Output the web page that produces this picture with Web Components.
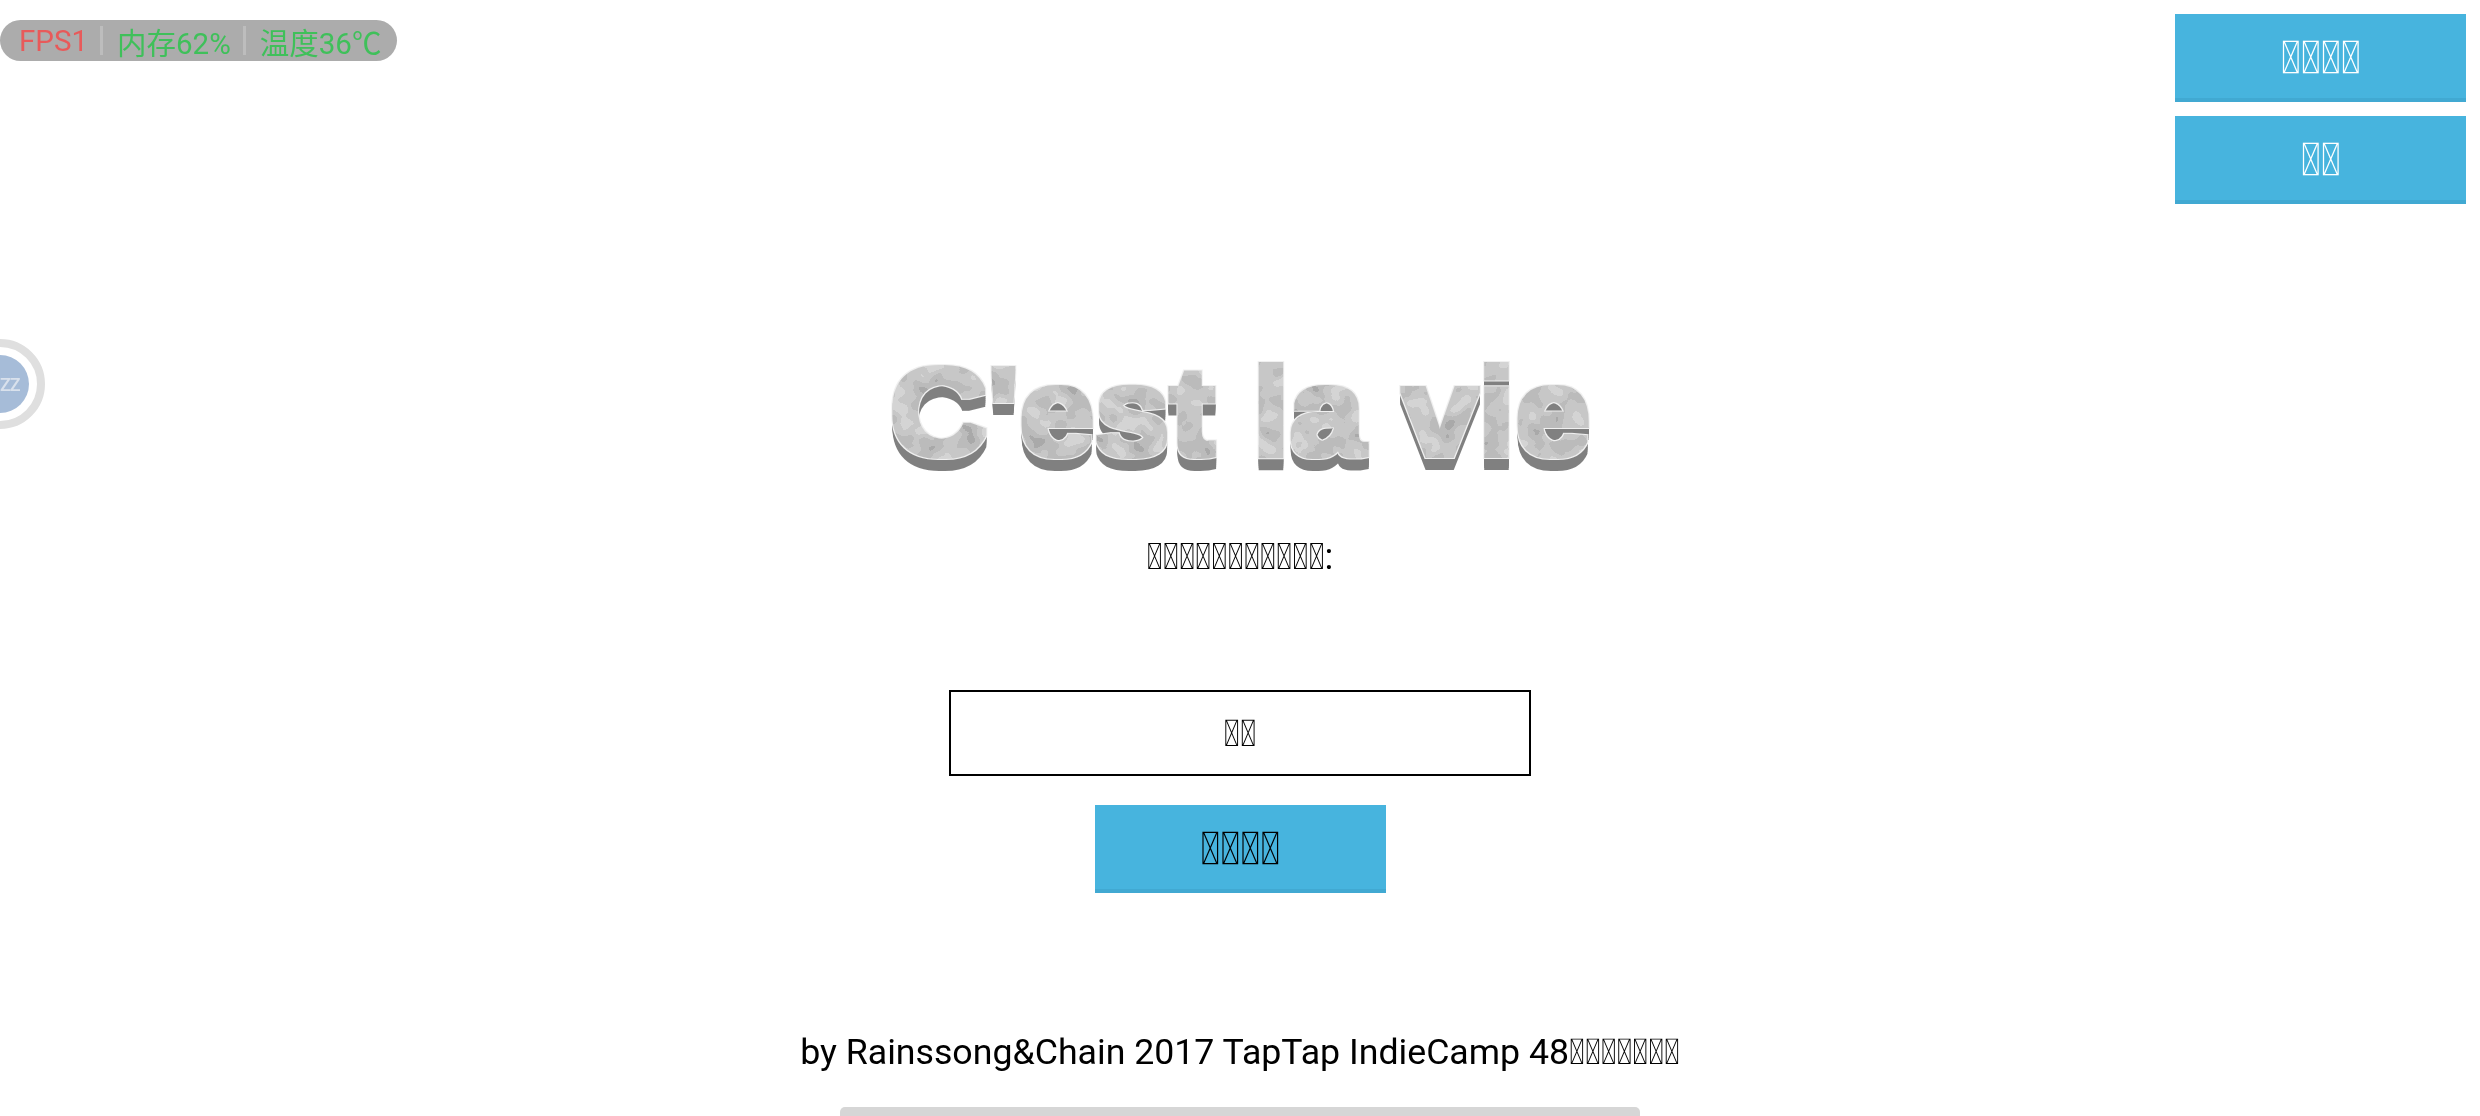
<!DOCTYPE html>
<html lang="zh">
<head>
<meta charset="utf-8">
<title>C'est la vie</title>
<style>
    html, body {
        margin: 0;
        height: 100%;
        background: #fff;
        overflow: hidden;
    }
</style>
</head>
<body>
<game-screen>
    <status-pill slot="overlay"></status-pill>
    <sleep-ball slot="overlay"></sleep-ball>
    <flat-button slot="actions" tone="light">&#xE000;&#xE000;&#xE000;&#xE000;</flat-button>
    <flat-button slot="actions" tone="light">&#xE000;&#xE000;</flat-button>
    <stone-title>C'est la vie</stone-title>
    <p-label>&#xE000;&#xE000;&#xE000;&#xE000;&#xE000;&#xE000;&#xE000;&#xE000;&#xE000;&#xE000;&#xE000;:</p-label>
    <name-box>&#xE000;&#xE000;</name-box>
    <flat-button class="go">&#xE000;&#xE000;&#xE000;&#xE000;</flat-button>
    <foot-note>by Rainssong&amp;Chain 2017 TapTap IndieCamp 48&#xE000;&#xE000;&#xE000;&#xE000;&#xE000;&#xE000;&#xE000;</foot-note>
</game-screen>

<script>
const screenTemplate = document.createElement('template');
screenTemplate.innerHTML = `
<style>
    :host {
        display: flex;
        flex-direction: column;
        align-items: center;
        position: relative;
        height: 1116px;
        font-family: Roboto, sans-serif;
        color: #000;
        will-change: transform;
    }
    .actions {
        align-self: stretch;
        display: flex;
        flex-direction: column;
        align-items: flex-end;
        gap: 14px;
        padding: 14px 14px 0 0;
    }
    main {
        display: flex;
        flex-direction: column;
        align-items: center;
    }
    .bar {
        width: 800px;
        height: 9px;
        margin-top: auto;
        background: #d6d6d6;
        border-radius: 5px 5px 0 0;
    }
</style>
<slot name="overlay"></slot>
<div class="actions"><slot name="actions"></slot></div>
<main><slot></slot></main>
<div class="bar"></div>
`;

class GameScreen extends HTMLElement {
    constructor() {
        super();
        this.attachShadow({ mode: 'open' }).appendChild(screenTemplate.content.cloneNode(true));
    }
}

const pillTemplate = document.createElement('template');
pillTemplate.innerHTML = `
<style>
    :host {
        position: absolute;
        left: 0;
        top: 20px;
        display: flex;
        align-items: center;
        width: 397px;
        height: 41px;
        box-sizing: border-box;
        padding-left: 19px;
        background: #acacac;
        border-radius: 21px;
        font: 400 29.5px Roboto, "Noto Sans CJK SC", sans-serif;
        color: #3fc05a;
        white-space: nowrap;
    }
    .fps { color: #e85a5a; }
    i {
        width: 3px;
        height: 29px;
        margin: 0 14px 0 12px;
        background: #bdbdbd;
    }
</style>
<span class="fps">FPS1</span><i></i><span>内存62%</span><i></i><span>温度36℃</span>
`;

class StatusPill extends HTMLElement {
    constructor() {
        super();
        this.attachShadow({ mode: 'open' }).appendChild(pillTemplate.content.cloneNode(true));
    }
}

const ballTemplate = document.createElement('template');
ballTemplate.innerHTML = `
<style>
    :host {
        position: absolute;
        left: -45px;
        top: 339px;
        width: 90px;
        height: 90px;
        box-sizing: border-box;
        display: flex;
        align-items: center;
        justify-content: center;
        border: 8px solid #dfdfdf;
        border-radius: 50%;
        background: #fff;
    }
    span {
        width: 58px;
        height: 58px;
        box-sizing: border-box;
        padding-left: 29px;
        display: flex;
        align-items: center;
        border-radius: 50%;
        background: #a6bcd8;
        color: #d9e1ec;
        font: 500 18px Roboto, sans-serif;
        letter-spacing: -1px;
    }
</style>
<span>ZZ</span>
`;

class SleepBall extends HTMLElement {
    constructor() {
        super();
        this.attachShadow({ mode: 'open' }).appendChild(ballTemplate.content.cloneNode(true));
    }
}

const buttonTemplate = document.createElement('template');
buttonTemplate.innerHTML = `
<style>
    :host {
        display: flex;
        align-items: center;
        justify-content: center;
        width: 291px;
        height: 88px;
        box-sizing: border-box;
        padding-top: 2px;
        background: #47b4de;
        border-bottom: 4px solid #41a9d2;
        font-size: 45px;
        color: #000;
    }
    :host([tone="light"]) {
        color: #fff;
    }
</style>
<slot></slot>
`;

class FlatButton extends HTMLElement {
    constructor() {
        super();
        this.attachShadow({ mode: 'open' }).appendChild(buttonTemplate.content.cloneNode(true));
    }
}

const titleTemplate = document.createElement('template');
titleTemplate.innerHTML = `
<style>
    :host {
        display: block;
        width: 760px;
        height: 150px;
        margin-top: 136px;
    }
    svg {
        display: block;
        width: 100%;
        height: 100%;
        overflow: visible;
    }
    text {
        font: 700 124px "Liberation Sans", Arial, sans-serif;
        text-anchor: middle;
    }
</style>
<svg viewBox="0 0 760 150" xmlns="http://www.w3.org/2000/svg">
    <defs>
        <filter id="stone" x="-5%" y="-20%" width="110%" height="140%" color-interpolation-filters="sRGB">
            <feMorphology in="SourceAlpha" operator="dilate" radius="2.5" result="face"/>
            <feOffset in="face" dy="2" result="d1"/>
            <feOffset in="face" dy="4" result="d2"/>
            <feOffset in="face" dy="6" result="d3"/>
            <feOffset in="face" dy="8" result="d4"/>
            <feOffset in="face" dy="10" result="d5"/>
            <feOffset in="face" dy="12" result="d6"/>
            <feMerge result="side">
                <feMergeNode in="d1"/><feMergeNode in="d2"/><feMergeNode in="d3"/>
                <feMergeNode in="d4"/><feMergeNode in="d5"/><feMergeNode in="d6"/>
            </feMerge>
            <feFlood flood-color="#808080"/>
            <feComposite in2="side" operator="in" result="sideGrey"/>
            <feMorphology in="face" operator="dilate" radius="1" result="rim"/>
            <feFlood flood-color="#f0f0f0"/>
            <feComposite in2="rim" operator="in" result="rimWhite"/>
            <feTurbulence type="fractalNoise" baseFrequency="0.05" numOctaves="2" seed="7"/>
            <feColorMatrix type="matrix" values="0 0 0 0 0  0 0 0 0 0  0 0 0 0 0  1.1 0 0 0 0" result="n"/>
            <feComponentTransfer in="n" result="blot">
                <feFuncA type="discrete" tableValues="0 0 0.06 0.12 0.2"/>
            </feComponentTransfer>
            <feGaussianBlur in="blot" stdDeviation="0.6" result="soft"/>
            <feFlood flood-color="#d4d4d4" result="base"/>
            <feMerge result="stoneTex"><feMergeNode in="base"/><feMergeNode in="soft"/></feMerge>
            <feComposite in="stoneTex" in2="face" operator="in" result="faceTex"/>
            <feMerge>
                <feMergeNode in="sideGrey"/>
                <feMergeNode in="rimWhite"/>
                <feMergeNode in="faceTex"/>
            </feMerge>
        </filter>
    </defs>
    <text transform="translate(380 115) scale(1.09 1)" filter="url(#stone)"></text>
</svg>
`;

class StoneTitle extends HTMLElement {
    constructor() {
        super();
        this.attachShadow({ mode: 'open' }).appendChild(titleTemplate.content.cloneNode(true));
    }

    connectedCallback() {
        this.shadowRoot.querySelector('text').textContent = this.textContent;
    }
}

const labelTemplate = document.createElement('template');
labelTemplate.innerHTML = `
<style>
    :host {
        display: block;
        margin-top: 52px;
        font-size: 36.5px;
        line-height: 30px;
        text-align: center;
    }
</style>
<slot></slot>
`;

class PLabel extends HTMLElement {
    constructor() {
        super();
        this.attachShadow({ mode: 'open' }).appendChild(labelTemplate.content.cloneNode(true));
    }
}

const boxTemplate = document.createElement('template');
boxTemplate.innerHTML = `
<style>
    :host {
        display: flex;
        align-items: center;
        justify-content: center;
        width: 582px;
        height: 86px;
        box-sizing: border-box;
        margin: 118px 0 29px;
        border: 2px solid #000;
        font-size: 37px;
    }
</style>
<slot></slot>
`;

class NameBox extends HTMLElement {
    constructor() {
        super();
        this.attachShadow({ mode: 'open' }).appendChild(boxTemplate.content.cloneNode(true));
    }
}

const footTemplate = document.createElement('template');
footTemplate.innerHTML = `
<style>
    :host {
        display: block;
        margin-top: 137px;
        font-size: 35.7px;
        line-height: 45px;
        white-space: nowrap;
    }
</style>
<slot></slot>
`;

class FootNote extends HTMLElement {
    constructor() {
        super();
        this.attachShadow({ mode: 'open' }).appendChild(footTemplate.content.cloneNode(true));
    }
}

customElements.define('game-screen', GameScreen);
customElements.define('status-pill', StatusPill);
customElements.define('sleep-ball', SleepBall);
customElements.define('flat-button', FlatButton);
customElements.define('stone-title', StoneTitle);
customElements.define('p-label', PLabel);
customElements.define('name-box', NameBox);
customElements.define('foot-note', FootNote);
</script>
</body>
</html>
